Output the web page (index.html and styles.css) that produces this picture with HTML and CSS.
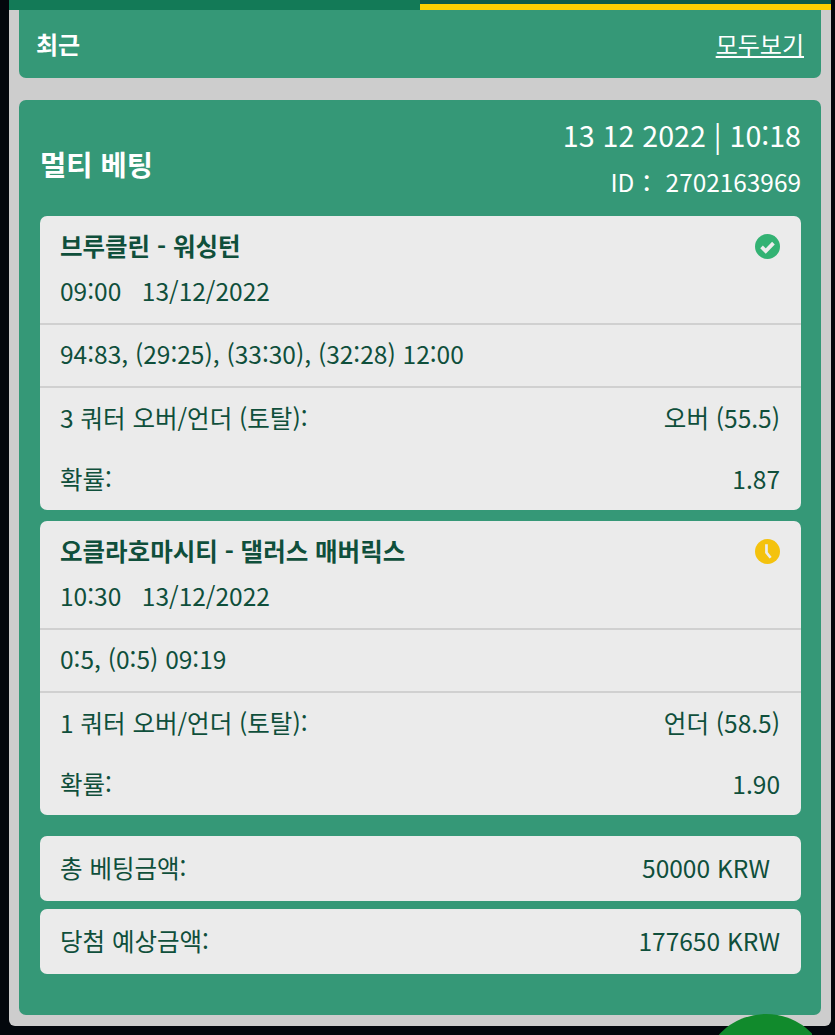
FILE: index.html
```html
<!DOCTYPE html>
<html lang="ko">
<head>
  <meta charset="UTF-8">
  <meta name="viewport" content="width=device-width, initial-scale=1.0">
  <title>최근 베팅</title>
  <link rel="stylesheet" href="styles.css">
</head>
<body>
  <div class="panel">
    <div class="tabs">
      <div class="tab"></div>
      <div class="tab tab_on"></div>
    </div>
    <div class="recent">
      <h2 class="recent_title">최근</h2>
      <a class="recent_all" href="#">모두보기</a>
    </div>
    <div class="bet">
      <div class="bet_head">
        <h1 class="bet_title">멀티 베팅</h1>
        <div class="bet_info">
          <p class="bet_date">13 12 2022 | 10:18</p>
          <p class="bet_id">ID： 2702163969</p>
        </div>
      </div>

      <div class="game">
        <div class="game_top">
          <div class="game_name">
            <span>브루클린 - 워싱턴</span>
            <svg class="icon" viewBox="0 0 24 24"><circle cx="12" cy="12" r="12" fill="#33b273"/><path d="M6.3 12.4l4 4 7.4-7.6" fill="none" stroke="#ececec" stroke-width="3.6"/></svg>
          </div>
          <p class="game_time">09:00 &nbsp; 13/12/2022</p>
        </div>
        <p class="game_score">94:83, (29:25), (33:30), (32:28) 12:00</p>
        <div class="game_pick">
          <div class="line"><span>3 쿼터 오버/언더 (토탈):</span><span>오버 (55.5)</span></div>
          <div class="line"><span>확률:</span><span>1.87</span></div>
        </div>
      </div>

      <div class="game">
        <div class="game_top">
          <div class="game_name">
            <span>오클라호마시티 - 댈러스 매버릭스</span>
            <svg class="icon" viewBox="0 0 24 24"><circle cx="12" cy="12" r="12" fill="#f4c20d"/><path d="M11 5v8l4 5" fill="none" stroke="#ececec" stroke-width="2.6"/></svg>
          </div>
          <p class="game_time">10:30 &nbsp; 13/12/2022</p>
        </div>
        <p class="game_score">0:5, (0:5) 09:19</p>
        <div class="game_pick">
          <div class="line"><span>1 쿼터 오버/언더 (토탈):</span><span>언더 (58.5)</span></div>
          <div class="line"><span>확률:</span><span>1.90</span></div>
        </div>
      </div>

      <div class="sum sum_first"><span>총 베팅금액:</span><span class="sum_krw">50000 KRW</span></div>
      <div class="sum"><span>당첨 예상금액:</span><span>177650 KRW</span></div>
    </div>
  </div>
  <div class="fab_clip"><div class="fab"></div></div>
</body>
</html>
```

FILE: styles.css
```css
* {margin: 0;padding: 0;box-sizing: border-box;}
html, body {height: 1035px;overflow: hidden;}
body {
  background-color: #03070c;
  color: #0f4f3b;
  font-family: "Noto Sans CJK KR", "Noto Sans", sans-serif;
  font-size: 24.5px;
  padding-left: 9px;
  position: relative;
}
.panel {
  width: 822px;
  height: 1026px;
  padding: 0 10px;
  background-color: #cdcdcd;
  border-radius: 0 0 6px 6px;
}
.tabs {display: flex;height: 10px;margin: 0 -10px;background-color: #137a57;}
.tab {flex: 1;}
.tab_on {background-color: #0f5c45;border-bottom: 6px solid #fdd000;}
.recent {
  display: flex;
  justify-content: space-between;
  align-items: center;
  height: 68px;
  padding: 0 17px 0 17px;
  margin-bottom: 22px;
  color: #fff;
  background-color: #359877;
  border-radius: 0 0 7px 7px;
}
.recent_title {font-size: 24px;font-weight: 700;margin-top: -2px;}
.recent_all {color: #fff;font-size: 24px;margin-top: -2px;}
.bet {
  height: 915px;
  padding: 0 20px 0 21px;
  background-color: #359877;
  border-radius: 7px;
}
.bet_head {
  display: flex;
  justify-content: space-between;
  align-items: center;
  height: 116px;
  color: #fff;
}
.bet_title {font-size: 28.5px;font-weight: 700;margin-top: 10px;}
.bet_info {text-align: right;padding-top: 2px;}
.bet_date {font-size: 28.6px;line-height: 46px;}
.bet_id {font-size: 24.4px;line-height: 48px;}
.game {
  height: 294px;
  margin-bottom: 11px;
  background-color: #ebebeb;
  border-radius: 7px;
}
.game_top {height: 109px;padding: 8px 21px 0 20px;border-bottom: 2px solid #d0d0d0;}
.game_name {display: flex;justify-content: space-between;align-items: center;font-size: 24.5px;font-weight: 700;height: 42px;}
.icon {width: 25px;height: 25px;margin-top: 2px;}
.game_time {line-height: 50px;}
.game_score {height: 63px;line-height: 58px;padding: 0 20px;border-bottom: 2px solid #d0d0d0;}
.game_pick {padding: 0 21px 0 20px;}
.line {display: flex;justify-content: space-between;align-items: center;height: 61px;margin-top: -1px;margin-bottom: 1px;}
.sum {
  display: flex;
  justify-content: space-between;
  align-items: center;
  height: 65px;
  padding: 0 21px 2px 20px;
  margin-bottom: 8px;
  background-color: #ebebeb;
  border-radius: 7px;
}
.sum_first {margin-top: 21px;}
.sum_krw {margin-right: 10px;}
.fab_clip {
  position: absolute;
  left: 719px;
  top: 1014px;
  width: 93px;
  height: 21px;
  overflow: hidden;
}
.fab {
  width: 128px;
  height: 128px;
  margin-left: -17px;
  background-color: #118a2c;
  border-radius: 50%;
}
```
